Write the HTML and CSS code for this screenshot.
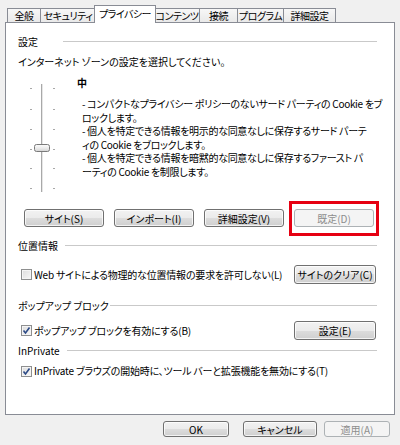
FILE: index.html
```html
<!DOCTYPE html>
<html lang="ja">
<head>
<meta charset="utf-8">
<title>インターネット オプション - プライバシー</title>
<link rel="stylesheet" href="styles.css">
</head>
<body>
<div class="dialog">
  <div class="tabs">
    <div class="tab tab-general">全般</div>
    <div class="tab tab-security">セキュリティ</div>
    <div class="tab tab-privacy active">プライバシー</div>
    <div class="tab tab-content">コンテンツ</div>
    <div class="tab tab-connect">接続</div>
    <div class="tab tab-program">プログラム</div>
    <div class="tab tab-advanced">詳細設定</div>
  </div>
  <div class="panel">
    <div class="group-head head-settings"><span>設定</span><i class="rule rule-settings"></i></div>
    <div class="intro">インターネット ゾーンの設定を選択してください。</div>
    <div class="slider-area">
      <svg class="slider" width="34" height="120" viewBox="0 0 34 120">
        <defs>
          <linearGradient id="thumbg" x1="0" y1="0" x2="0" y2="1">
            <stop offset="0" stop-color="#fdfdfd"/>
            <stop offset="0.5" stop-color="#ececec"/>
            <stop offset="1" stop-color="#d2d2d2"/>
          </linearGradient>
        </defs>
        <rect x="15" y="8" width="1" height="108" fill="#a9a9a9"/>
        <rect x="16" y="8" width="1" height="108" fill="#e6e6e6"/>
        <g fill="#a8a8a8">
          <rect x="4" y="12" width="2" height="1"/><rect x="27" y="12" width="2" height="1"/>
          <rect x="4" y="33" width="2" height="1"/><rect x="27" y="33" width="2" height="1"/>
          <rect x="4" y="53" width="2" height="1"/><rect x="27" y="53" width="2" height="1"/>
          <rect x="4" y="73" width="2" height="1"/><rect x="27" y="73" width="2" height="1"/>
          <rect x="4" y="92" width="2" height="1"/><rect x="27" y="92" width="2" height="1"/>
          <rect x="4" y="112" width="2" height="1"/><rect x="27" y="112" width="2" height="1"/>
        </g>
        <rect x="8.5" y="68.5" width="15" height="7" rx="2" ry="2" fill="url(#thumbg)" stroke="#7a7a7a"/>
      </svg>
      <div class="level-text">
        <div class="level">中</div>
        <div class="desc">- コンパクトなプライバシー ポリシーのないサード パーティの Cookie をブ<br>ロックします。<br>- 個人を特定できる情報を明示的な同意なしに保存するサード パーテ<br>ィの Cookie をブロックします。<br>- 個人を特定できる情報を暗黙的な同意なしに保存するファースト パ<br>ーティの Cookie を制限します。</div>
      </div>
    </div>
    <div class="button-row">
      <button class="btn btn-main">サイト(S)</button>
      <button class="btn btn-main">インポート(I)</button>
      <button class="btn btn-main">詳細設定(V)</button>
      <button class="btn btn-main btn-disabled highlighted" disabled>既定(D)</button>
    </div>
    <div class="group-head head-loc"><span>位置情報</span><i class="rule rule-loc"></i></div>
    <div class="option-row row-loc">
      <label class="check"><span class="box"></span><span>Web サイトによる物理的な位置情報の要求を許可しない(L)</span></label>
      <button class="btn btn-side">サイトのクリア(C)</button>
    </div>
    <div class="group-head head-popup"><span>ポップアップ ブロック</span><i class="rule rule-popup"></i></div>
    <div class="option-row row-popup">
      <label class="check"><span class="box checked"><svg width="9" height="9" viewBox="0 0 9 9"><path d="M1.5 4.5 L3.5 7 L7.5 1.5" fill="none" stroke="#2c4a86" stroke-width="1.6"/></svg></span><span>ポップアップ ブロックを有効にする(B)</span></label>
      <button class="btn btn-side">設定(E)</button>
    </div>
    <div class="group-head head-inprivate"><span>InPrivate</span><i class="rule rule-inprivate"></i></div>
    <div class="option-row row-inprivate">
      <label class="check"><span class="box checked"><svg width="9" height="9" viewBox="0 0 9 9"><path d="M1.5 4.5 L3.5 7 L7.5 1.5" fill="none" stroke="#2c4a86" stroke-width="1.6"/></svg></span><span>InPrivate ブラウズの開始時に、ツール バーと拡張機能を無効にする(T)</span></label>
    </div>
  </div>
  <div class="footer">
    <button class="btn btn-ok">OK</button>
    <button class="btn btn-cancel">キャンセル</button>
    <button class="btn btn-apply btn-disabled" disabled>適用(A)</button>
  </div>
</div>
</body>
</html>
```

FILE: styles.css
```css
html, body {
  margin: 0;
  padding: 0;
}
body {
  width: 400px;
  height: 445px;
  overflow: hidden;
  background: #f0f0f0;
  font-family: "Noto Sans CJK JP", "Noto Sans", sans-serif;
  font-size: 10px;
  font-feature-settings: "palt";
  color: #000;
}
.dialog {
  display: flex;
  flex-direction: column;
}
.tabs {
  display: flex;
  align-items: flex-end;
  height: 17px;
  margin-top: 5px;
  padding-left: 7px;
}
.tab {
  box-sizing: border-box;
  flex: none;
  height: 14px;
  padding: 0;
  margin-right: -1px;
  border: 1px solid #898c95;
  border-bottom: none;
  background: linear-gradient(#f7f7f7, #e9e9e9);
  line-height: 13px;
  text-align: center;
  white-space: nowrap;
  overflow: hidden;
  letter-spacing: -0.5px;
}
.tab-general { width: 34px; }
.tab-security { width: 56px; }
.tab-privacy { width: 60px; }
.tab-content { width: 46px; }
.tab-connect { width: 39px; }
.tab-program { width: 47px; }
.tab-advanced { width: 53px; }
.tab.active {
  position: relative;
  z-index: 1;
  height: 18px;
  margin: 0 -2px -1px -1px;
  width: 62px;
  background: #fff;
  line-height: 15px;
}
.panel {
  box-sizing: border-box;
  height: 393px;
  margin: 0 5px;
  padding: 12px 17px 0 12px;
  border: 1px solid #898c95;
  background: #fff;
  display: flex;
  flex-direction: column;
}
.group-head {
  display: flex;
  align-items: center;
  height: 14px;
  line-height: 14px;
  white-space: nowrap;
}
.rule {
  flex: 1;
  height: 1px;
  background: #c9c9c9;
  border-bottom: 1px solid #fff;
}
.rule-settings { margin-left: 25px; }
.rule-loc { margin-left: 7px; }
.rule-popup { margin-left: 1px; }
.rule-inprivate { margin-left: 7px; }
.intro {
  margin-top: 6px;
  height: 14px;
  line-height: 14px;
}
.slider-area {
  display: flex;
  margin-top: 7px;
  height: 120px;
}
.slider {
  display: block;
  flex: none;
  margin-left: 8px;
}
.level-text {
  margin-left: 17px;
  white-space: nowrap;
}
.level {
  font-weight: bold;
  height: 14px;
  line-height: 14px;
}
.desc {
  margin-top: 7px;
  padding-left: 5px;
  line-height: 13.5px;
  letter-spacing: -0.3px;
}
.button-row {
  display: flex;
  gap: 10px;
  margin-top: 13px;
  margin-left: 6px;
}
.btn {
  box-sizing: border-box;
  height: 18px;
  padding: 0;
  border: 1px solid #707070;
  border-radius: 3px;
  background: linear-gradient(#f2f2f2 0%, #ebebeb 50%, #dddddd 50%, #cfcfcf 100%);
  box-shadow: inset 0 0 0 1px rgba(255, 255, 255, 0.75);
  font-family: inherit;
  font-size: 10px;
  font-feature-settings: "palt";
  color: #000;
  line-height: 15px;
  white-space: nowrap;
}
.btn-main { width: 80px; }
.btn-disabled {
  border-color: #adb2b5;
  background: #f4f4f4;
  box-shadow: none;
  color: #8d8d8d;
}
.highlighted {
  position: relative;
}
.highlighted::after {
  content: "";
  position: absolute;
  top: -9px;
  bottom: -10px;
  left: -6px;
  right: -6px;
  border: 3px solid #e60012;
}
.head-loc { margin-top: 12px; }
.option-row {
  display: flex;
  align-items: center;
  justify-content: space-between;
  white-space: nowrap;
}
.row-loc { margin-top: 12px; height: 19px; }
.head-popup { margin-top: 15px; }
.row-popup { margin-top: 8px; height: 19px; }
.head-inprivate { margin-top: 4px; }
.row-inprivate { margin-top: 6px; height: 14px; }
.btn-side {
  width: 82px;
  height: 19px;
  margin-right: 1px;
  line-height: 16px;
}
.check {
  display: flex;
  align-items: center;
  gap: 2px;
  margin-left: 3px;
  line-height: 14px;
  letter-spacing: -0.2px;
}
.box {
  box-sizing: border-box;
  width: 11px;
  height: 11px;
  border: 1px solid #8e8f8f;
  background: linear-gradient(135deg, #dcdcdc, #f7f7f7);
  box-shadow: inset 0 0 0 1px #f4f4f4;
  display: flex;
  align-items: center;
  justify-content: center;
}
.box svg { display: block; }
.footer {
  display: flex;
  margin-top: 6px;
  padding-left: 163px;
}
.footer .btn {
  height: 16px;
  line-height: 13px;
}
.btn-ok { width: 66px; }
.btn-cancel { width: 74px; margin-left: 14px; }
.btn-apply { width: 66px; margin-left: 7px; }
```
